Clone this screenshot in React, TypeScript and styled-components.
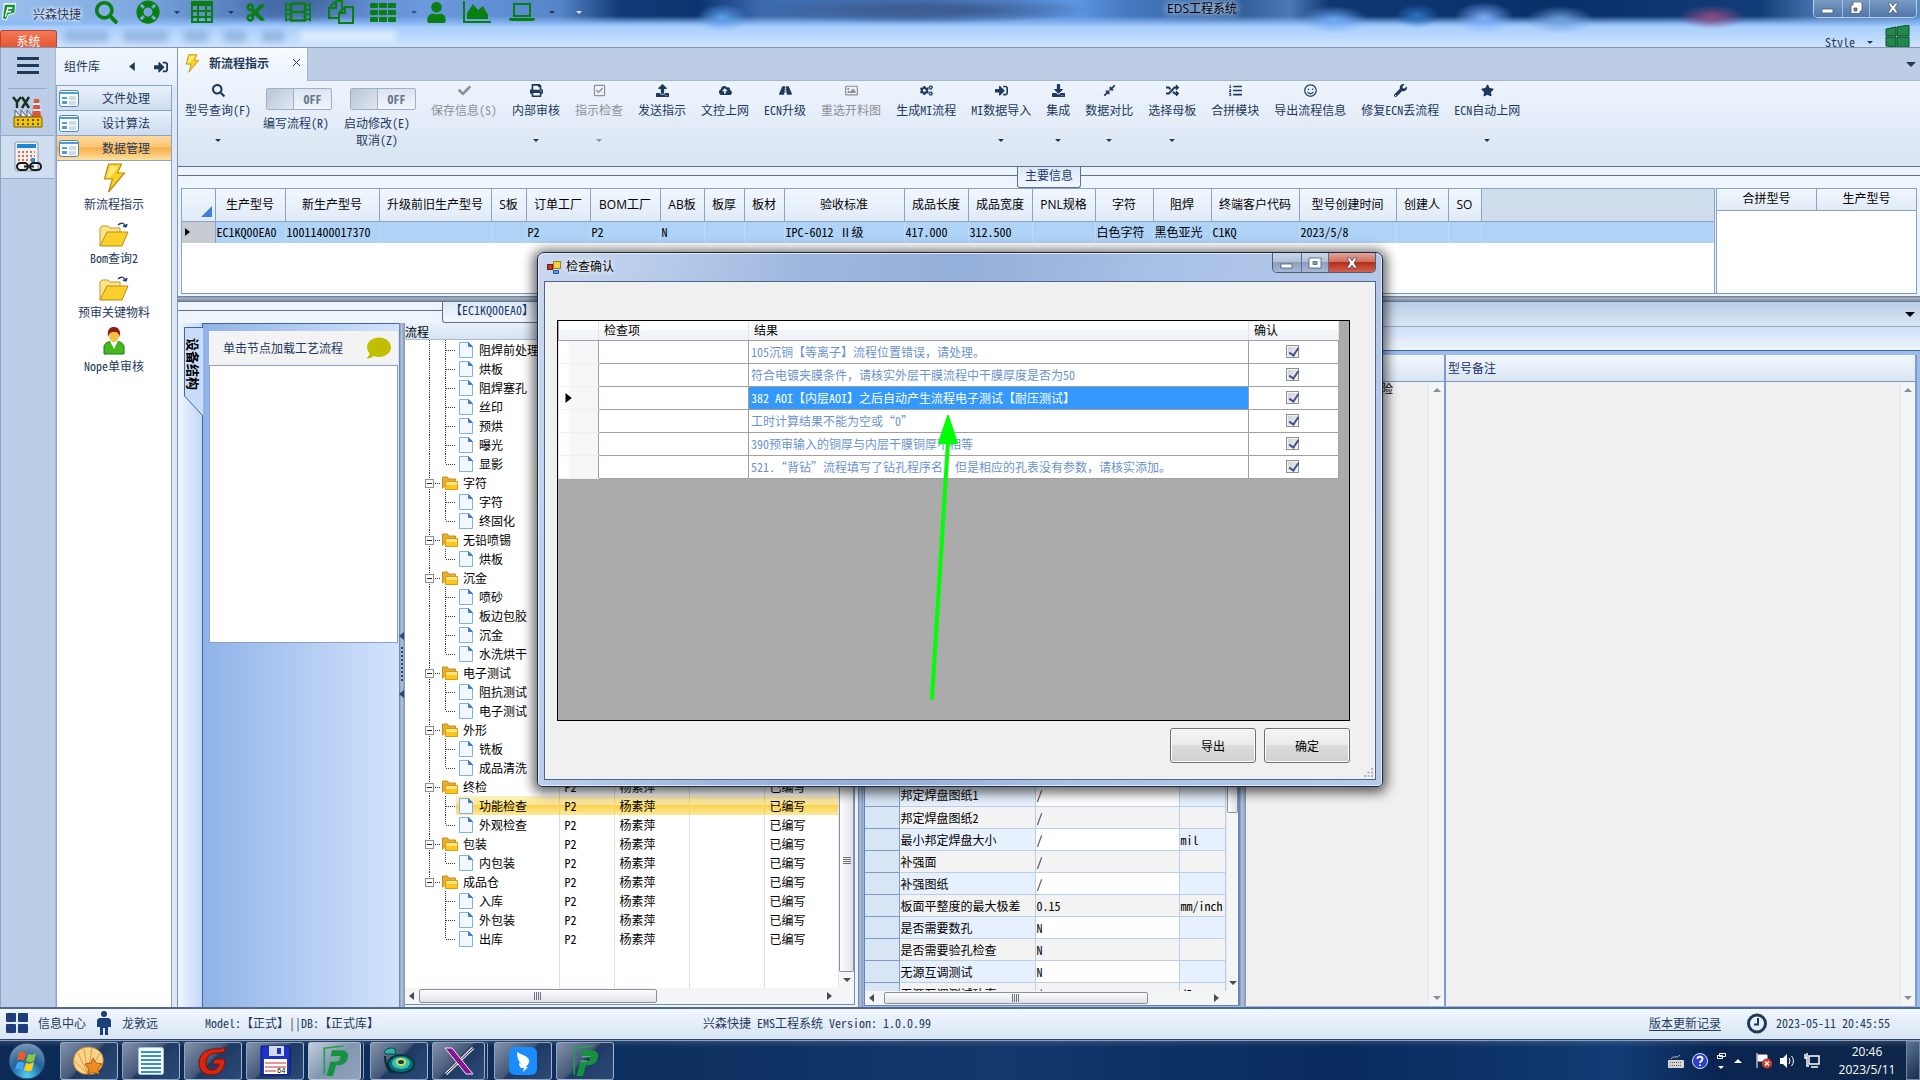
import React from 'react';
import styled, { createGlobalStyle, css } from 'styled-components';
import {
  FaSearch, FaLifeRing, FaCut, FaFilm, FaUser, FaCheck, FaPrint, FaRegCheckSquare, FaUpload,
  FaCloudUploadAlt, FaRoad, FaRegImage, FaCogs, FaSignInAlt, FaDownload, FaCompressAlt,
  FaRandom, FaListOl, FaRegSmile, FaWrench, FaStar, FaComment,
} from 'react-icons/fa';

const song = '"Noto Sans Mono CJK SC", "Noto Sans CJK SC", sans-serif';
const yahei = '"Open Sans", "Noto Sans CJK SC", sans-serif';
const navy = '#1e395b';
const line = '#8aa3c4';

const GlobalStyle = createGlobalStyle`
  * { box-sizing: border-box; }
  body { margin: 0; font: 12px/16px ${song}; color: #000; overflow: hidden; }
  button, input { font: inherit; color: inherit; margin: 0; padding: 0; }
  button { border: 0; background: none; }
  table { border-collapse: collapse; table-layout: fixed; }
  th { font-weight: 400; }
  th, td { padding: 0; }
  svg { display: block; flex: none; }
`;

const Desktop = styled.div`
  position: relative;
  display: flex;
  flex-direction: column;
  height: 100vh;
  background: #d9e6f5;
`;

const Row = styled.div`
  display: flex;
  align-items: center;
`;

/* ---------- title bar ---------- */

const TitleBar = styled.header`
  position: relative;
  flex: none;
  height: 48px;
  display: flex;
  flex-direction: column;
  overflow: hidden;
  border-bottom: 1px solid #7f95b5;
  background:
    radial-gradient(ellipse 26px 14px at 722px 18px, #5fa0ee, transparent),
    radial-gradient(ellipse 170px 14px at 920px 10px, #3d5f94 30%, transparent),
    radial-gradient(ellipse 34px 14px at 1334px 20px, #6faaf4, transparent),
    radial-gradient(ellipse 22px 12px at 1417px 16px, #2a74c4, transparent),
    radial-gradient(ellipse 30px 16px at 1484px 18px, #7eb0fa, transparent),
    radial-gradient(ellipse 34px 14px at 1560px 20px, #6fa2e0, transparent),
    radial-gradient(ellipse 34px 12px at 1712px 17px, #8d4d80, transparent),
    radial-gradient(ellipse 70px 24px at 300px 0, #41659d, transparent),
    linear-gradient(180deg, transparent 16px, #8dbaf5 24px, #a9cffd 27px, #cfe4fb 48px),
    linear-gradient(90deg, #9cbfee 0, #7fa9e0 130px, #4a74b4 270px, #6b9ade 420px, #5584c8 560px, #123a78 620px,
      #0d3470 700px, #3b6aae 760px, #4a78ba 900px, #5d93e0 1080px, #4478bf 1130px, #345e9b 1240px, #4b78b6 1290px,
      #0f3872 1330px, #0a3069 1560px, #123c78 1760px, #4a78b2 1820px, #5b8ac2 100%);
`;

const Ghosts = styled.div`
  position: absolute;
  left: 64px;
  top: 31px;
  display: flex;
  gap: 16px;
  filter: blur(3px);
`;

const Ghost = styled.i<{ $w: number; $light?: boolean }>`
  width: ${p => p.$w}px;
  height: 11px;
  background: ${p => (p.$light ? '#dcebff' : 'rgba(80, 120, 180, 0.35)')};
`;

const QuickBar = styled(Row)`
  height: 27px;
  padding: 0 0 2px 1px;
  color: #0a7d14;
`;

const AppName = styled.span`
  width: 66px;
  padding: 4px 0 0 16px;
  color: ${navy};
  white-space: nowrap;
  text-shadow: 0 0 4px #fff, 0 0 4px #fff;
`;

const QuickButton = styled.button<{ $w: number }>`
  width: ${p => p.$w}px;
  height: 24px;
  display: flex;
  align-items: center;
  gap: 14px;
  color: #087f10;
  white-space: nowrap;
`;

const SearchButton = styled(QuickButton)`
  padding-left: 12px;
`;

const Caret = styled.i<{ $color?: string; $size?: number }>`
  flex: none;
  width: 0;
  height: 0;
  border: ${p => p.$size ?? 3}px solid transparent;
  border-top-color: ${p => p.$color ?? navy};
  border-bottom: 0;
`;

const WindowTitle = styled.span`
  position: absolute;
  left: 1167px;
  top: 0;
  font-family: ${yahei};
  line-height: 18px;
  text-shadow: 0 0 6px #dfeeff, 0 0 8px #dfeeff;
`;

const FrameButtons = styled.div<{ $dialog?: boolean }>`
  position: absolute;
  top: ${p => (p.$dialog ? 0 : -1)}px;
  right: ${p => (p.$dialog ? 6 : 3)}px;
  display: flex;
  border: 1px solid ${p => (p.$dialog ? '#4d5c78' : '#b9cfe8')};
  border-top: 0;
  border-radius: 0 0 5px 5px;
  overflow: hidden;
  height: ${p => (p.$dialog ? 20 : 19)}px;
`;

const FrameButton = styled.button<{ $w: number; $close?: boolean; $clear?: boolean }>`
  width: ${p => p.$w}px;
  display: flex;
  align-items: center;
  justify-content: center;
  border-left: 1px solid ${p => (p.$clear ? '#a5bfdd' : '#5b6b88')};
  background: ${p =>
    p.$clear
      ? 'linear-gradient(#7c9cc4, #4f77a9)'
      : p.$close
        ? 'linear-gradient(#e3a49b 0, #d17060 45%, #b62f1b 50%, #d4604a 100%)'
        : 'linear-gradient(#c9d6ea 0, #b3c2da 45%, #8d9fbe 50%, #a6b8d5 100%)'};
  &:first-child { border-left: 0; }
`;

const RibbonRow = styled(Row)`
  justify-content: space-between;
  align-items: flex-end;
  flex: 1;
`;

const SystemTab = styled.button`
  width: 57px;
  height: 17px;
  padding-top: 3px;
  border: 1px solid #b9442a;
  border-bottom: 0;
  border-radius: 3px 3px 0 0;
  background: linear-gradient(#f2795a, #e8562f);
  color: #fff;
  line-height: 13px;
`;

const StyleMenu = styled.button`
  display: flex;
  align-items: flex-end;
  gap: 12px;
  height: 21px;
  padding-right: 10px;
  color: ${navy};
  line-height: 11px;
  & > i { margin-bottom: 3px; }
`;

/* ---------- left rail and library ---------- */

const Body = styled.div`
  flex: 1;
  min-height: 0;
  display: flex;
`;

const Rail = styled.nav`
  width: 56px;
  flex: none;
  display: flex;
  flex-direction: column;
  padding-right: 1px;
  border-left: 1px solid #8fa5c4;
  border-right: 1px solid #a5b9d6;
  background: #bccee7;
`;

const RailButton = styled.button<{ $h: number; $active?: boolean }>`
  height: ${p => p.$h}px;
  display: flex;
  align-items: center;
  justify-content: center;
  border-bottom: 1px solid #94aac9;
  background: ${p => (p.$active ? '#cfdef1' : 'transparent')};
`;

const MenuButton = styled(RailButton)`
  margin: 0 7px;
  padding-bottom: 5px;
`;

const Library = styled.aside`
  width: 122px;
  flex: none;
  display: flex;
  flex-direction: column;
  padding-right: 5px;
  background: #dce8f7;
  border-right: 1px solid #7d96ba;
`;

const LibraryHead = styled(Row)`
  height: 37px;
  margin-right: -5px;
  padding: 0 9px 0 8px;
  gap: 17px;
  background: linear-gradient(#f3f8fe, #e5eefa);
  color: ${navy};
  font-family: ${yahei};
  font-size: 12px;
  & > b { margin-right: auto; font-weight: 400; }
`;

const LibraryBody = styled.div`
  flex: 1;
  display: flex;
  flex-direction: column;
  background: #fff;
  border: 1px solid #8ba3c6;
  border-bottom: 0;
`;

const Category = styled.button<{ $active?: boolean }>`
  height: 25px;
  flex: none;
  display: flex;
  align-items: center;
  gap: 23px;
  padding-left: 2px;
  color: ${navy};
  border-bottom: 1px solid #8ba3c6;
  background: ${p =>
    p.$active
      ? 'linear-gradient(#fcd9a0 0, #fbc672 45%, #f9ae48 50%, #fde1a0 100%)'
      : 'linear-gradient(#e9f1fb, #cddcef)'};
`;

const ToolEntry = styled.button`
  display: flex;
  flex-direction: column;
  align-items: center;
  justify-content: flex-end;
  gap: 3px;
  height: 54px;
  padding-bottom: 3px;
  color: ${navy};
`;

/* ---------- document area ---------- */

const Documents = styled.main`
  flex: 1;
  min-width: 0;
  display: flex;
  flex-direction: column;
`;

const TabStrip = styled(Row)`
  height: 33px;
  flex: none;
  justify-content: space-between;
  padding-right: 4px;
  background: #bccde5;
  border-bottom: 1px solid #a3b7d2;
`;

const DocTab = styled(Row)`
  width: 130px;
  height: 33px;
  padding: 0 6px 2px 7px;
  gap: 9px;
  border-right: 1px solid #9fb3d0;
  background: linear-gradient(#f8fbff, #ecf3fc);
  color: ${navy};
  font-weight: 700;
  & > button { margin-left: auto; }
`;

const Toolbar = styled.div`
  height: 86px;
  flex: none;
  display: flex;
  gap: 15px;
  padding: 3px 7px 0;
  background: linear-gradient(#eef4fd, #d8e4f2);
  border-bottom: 1px solid #5d7290;
`;

const ToolButton = styled.button`
  display: flex;
  flex-direction: column;
  align-items: center;
  height: 62px;
  color: ${navy};
  white-space: nowrap;
  &:disabled { color: #8e9196; }
  & > span { margin: 5px 0 21px; }
`;

const SwitchGroup = styled.div<{ $w: number }>`
  width: ${p => p.$w}px;
  margin-left: -3px;
  padding-top: 4px;
  color: ${navy};
  text-align: center;
  line-height: 17px;
  white-space: nowrap;
  & > span { display: block; width: 66px; }
`;

const Switch = styled.label`
  display: flex;
  width: 66px;
  height: 22px;
  margin: 0 0 4px auto;
  border: 1px solid #9fafc6;
  border-radius: 2px;
  background: linear-gradient(#dbe4ef, #f1f6fc);
  color: #69788f;
  font-weight: 700;
  & > input {
    appearance: none;
    width: 27px;
    border-right: 1px solid #9fafc6;
    background: linear-gradient(135deg, #b9c5d5, #dfe7f1);
  }
  & > span { flex: 1; line-height: 20px; }
`;

const TopGroup = styled.section`
  height: 129px;
  flex: none;
  display: flex;
  flex-direction: column;
  align-items: stretch;
  background: #eaf2fc;
`;

const CaptionRow = styled.div`
  height: 21px;
  flex: none;
  display: flex;
  justify-content: center;
  background: linear-gradient(#edf4fd 8px, #5d7290 8px, #5d7290 9px, #eef5fd 9px);
`;

const Caption = styled.h2<{ $w?: number }>`
  margin: 0;
  height: 21px;
  width: ${p => (p.$w ? p.$w + 'px' : 'auto')};
  padding: 0 7px;
  font: 12px/15px ${song};
  color: #1c3a6e;
  border: 1px solid #5d7290;
  border-top: 0;
  border-radius: 0 0 3px 3px;
  background: linear-gradient(#dde8f6, #f3f8fe);
`;

const TopGrids = styled.div`
  flex: 1;
  display: flex;
  gap: 1px;
  margin: 0 3px 2px;
  border-bottom: 1px solid #7a96bb;
`;

const GridBox = styled.div<{ $w?: number }>`
  ${p => (p.$w ? css`width: ${p.$w}px; flex: none;` : css`flex: 1;`)}
  min-width: 0;
  overflow: hidden;
  background: #fff;
  border: 1px solid ${line};
  border-bottom: 0;
`;

const InfoTable = styled.table<{ $head: number }>`
  width: 100%;
  white-space: nowrap;
  & th {
    height: ${p => p.$head}px;
    font-family: ${yahei};
    text-align: center;
    border-right: 1px solid ${line};
    border-bottom: 1px solid ${line};
    background: linear-gradient(#f1f7fe, #e0eaf6);
    overflow: hidden;
  }
  & th:last-child { border-right: 0; }
  & td {
    height: 22px;
    padding-left: 1px;
    background: #afd2f7;
    border-right: 1px solid #bfdcf8;
    overflow: hidden;
  }
`;

const CornerCell = styled.th`
  & > svg { margin: 14px 3px 0 auto; }
`;
const BlankHead = styled.th`
  && { background: #cfdded; }
`;
const MarkerCell = styled.td`
  && { background: #c7cbd2; border-right: 1px solid ${line}; padding-left: 1px; }
`;

const HSplitter = styled.div`
  height: 6px;
  flex: none;
  background: linear-gradient(#5d7290 0, #a8b2c0 2px, #8f9bad 4px, #5d7290 6px);
`;

const VSplitter = styled.div<{ $w: number }>`
  width: ${p => p.$w}px;
  flex: none;
  display: flex;
  flex-direction: column;
  align-items: center;
  justify-content: center;
  gap: 7px;
  background: linear-gradient(90deg, #5f7ba8, #b4c4dc 40%, #8494ac);
`;

const Dots = styled.i`
  width: 2px;
  height: 36px;
  background: repeating-linear-gradient(#26497f 0 2px, transparent 2px 4px);
`;

const Lower = styled.div`
  flex: 1;
  min-height: 0;
  display: flex;
`;

const LeftGroup = styled.section`
  width: 680px;
  flex: none;
  display: flex;
  flex-direction: column;
  background: #edf4fd;
`;

const LeftBody = styled.div`
  flex: 1;
  min-height: 0;
  display: flex;
  padding-left: 4px;
`;

const SideTabs = styled.div`
  width: 21px;
  flex: none;
  position: relative;
  background: linear-gradient(90deg, #e6effd, #c3d8f7);
  border-right: 1px solid #3f65a5;
`;

const SideTabLabel = styled.button`
  position: absolute;
  left: 3px;
  top: 15px;
  writing-mode: vertical-rl;
  text-orientation: sideways;
  font-size: 13px;
  line-height: 16px;
  font-weight: 700;
`;

const EquipPane = styled.div`
  width: 196px;
  flex: none;
  display: flex;
  flex-direction: column;
  padding: 7px 1px 0 6px;
  border-top: 1px solid #3f65a5;
  background: linear-gradient(90deg, #8fb3e8, #d3e3fc);
`;

const EquipHead = styled(Row)`
  height: 34px;
  flex: none;
  justify-content: space-between;
  padding: 0 7px 0 14px;
  background: #f3f3f4;
  color: ${navy};
`;

const EquipBox = styled.div`
  height: 278px;
  background: #fff;
  border: 1px solid #8aa3c4;
`;

const TreePane = styled.div`
  flex: 1;
  min-width: 0;
  display: flex;
  flex-direction: column;
  margin: 0 3px 2px 0;
  border-right: 1px solid #6f8fbc;
  border-bottom: 1px solid #6f8fbc;
  background: #fff;
`;

const TreeHead = styled.div`
  height: 17px;
  flex: none;
  line-height: 18px;
  border-bottom: 1px solid #a9bbd3;
  background: linear-gradient(#e9f1fb, #d6e3f3);
`;

const TreeMain = styled.div`
  flex: 1;
  min-height: 0;
  display: flex;
`;

const TreeScroll = styled.div`
  flex: 1;
  min-width: 0;
  overflow: hidden;
`;

const TreeTable = styled.table`
  width: 100%;
  height: 100%;
  white-space: nowrap;
  & td { height: 19px; border-right: 1px solid #dcdfe4; padding-left: 5px; }
  & td:first-child { padding: 0; }
  & td:last-child { border-right: 0; }
  & tr:last-child td { height: auto; }
`;

const selectedFill = 'linear-gradient(#fdf0bf 0, #fde68f 45%, #fbd24f 50%, #fde99b 100%)';

const TreeRow = styled.tr<{ $selected?: boolean }>`
  & > td + td { background: ${p => (p.$selected ? selectedFill : 'none')}; }
  ${p => p.$selected && css`& > td { border-right-color: #f6d565 !important; }`}
`;

const TreeCell = styled.div`
  display: flex;
  height: 19px;
`;

const TreeLabel = styled.div<{ $selected?: boolean; $leaf: boolean }>`
  flex: 1;
  display: flex;
  align-items: center;
  gap: ${p => (p.$leaf ? 6 : 5)}px;
  padding-left: ${p => (p.$leaf ? 3 : 1)}px;
  background: ${p => (p.$selected ? selectedFill : 'none')};
  line-height: 19px;
`;

/* ---------- scroll bars ---------- */

const VBar = styled.div<{ $w: number }>`
  width: ${p => p.$w}px;
  flex: none;
  display: flex;
  flex-direction: column;
  justify-content: space-between;
  align-items: center;
  border-left: 1px solid #e3e6ea;
  background: #f4f5f7;
`;

const HBar = styled.div<{ $h?: number }>`
  height: ${p => p.$h ?? 16}px;
  flex: none;
  display: flex;
  align-items: center;
  background: #f4f5f7;
`;

const HThumb = styled.button<{ $w: number; $h?: number }>`
  width: ${p => p.$w}px;
  height: ${p => p.$h ?? 14}px;
  margin-right: auto;
  border: 1px solid #8d9097;
  border-radius: 2px;
  background:
    repeating-linear-gradient(90deg, #6d7078 0 1px, transparent 1px 2px) center / 8px 8px no-repeat,
    linear-gradient(#fbfcfd, #dfe3e9);
`;

const VThumb = styled.button<{ $grip: string; $share?: string }>`
  ${p => (p.$share ? css`height: ${p.$share};` : css`flex: 1;`)}
  width: 100%;
  border: 1px solid #8d9097;
  border-top: 0;
  border-radius: 0 0 2px 2px;
  background:
    repeating-linear-gradient(#6d7078 0 1px, transparent 1px 2px) center ${p => p.$grip} / 8px 8px no-repeat,
    linear-gradient(90deg, #fbfcfd, #dfe3e9);
`;

const ArrowButton = styled.button<{ $after?: number }>`
  width: 14px;
  height: 16px;
  flex: none;
  display: flex;
  align-items: center;
  justify-content: center;
  margin-right: ${p => p.$after ?? 0}px;
`;

/* ---------- right dock ---------- */

const Dock = styled.section`
  flex: 1;
  min-width: 0;
  display: flex;
  flex-direction: column;
`;

const DockStrip = styled(Row)`
  height: 25px;
  flex: none;
  justify-content: flex-end;
  padding-right: 5px;
  background: linear-gradient(#b9cce6, #dbe7f5);
  border-bottom: 1px solid #93a8c6;
`;

const DockBand = styled.div`
  height: 24px;
  flex: none;
  background: linear-gradient(#cfdff7, #eff5fd);
  border-bottom: 1px solid #3f65a5;
`;

const DockBody = styled.div`
  flex: 1;
  min-height: 0;
  display: flex;
  padding: 4px 3px 1px 1px;
  background: #9cbcec;
`;

const ParamPane = styled.div`
  width: 375px;
  flex: none;
  display: flex;
  flex-direction: column;
  background: #e8f0fa;
  border: 1px solid #5f86bd;
`;

const ParamMain = styled.div`
  flex: 1;
  min-height: 0;
  display: flex;
`;

const ParamScroll = styled.div`
  flex: 1;
  overflow: hidden;
  display: flex;
  flex-direction: column;
  padding-top: 428px;
`;

const ParamTable = styled.table`
  width: 100%;
  white-space: nowrap;
  & td {
    height: 22px;
    padding-left: 1px;
    border-right: 1px solid #b9cfec;
    border-bottom: 1px solid #b9cfec;
    overflow: hidden;
    background: #f3f3f3;
  }
  & th { background: #d8e5f4; border: 1px solid #7f9cc6; border-left: 0; }
  & tr:nth-child(odd) td { background: #e7f1fd; }
  & tr:nth-child(odd) td:nth-child(3) { background: #fff; }
`;

const NotePane = styled.div<{ $w?: number }>`
  ${p => (p.$w ? css`width: ${p.$w}px; flex: none;` : css`flex: 1;`)}
  display: flex;
  flex-direction: column;
  border-right: 2px solid #7d9cc9;
  background: #f0f0f0;
`;

const NoteHead = styled.h3`
  height: 27px;
  flex: none;
  margin: 0;
  padding-left: 2px;
  font: 12px/26px ${song};
  color: #1c2f6e;
  border-bottom: 1px solid #7a96bb;
  background: linear-gradient(#f3f8fd, #d9e5f2);
`;

const NoteBody = styled.div`
  flex: 1;
  display: flex;
  justify-content: flex-end;
  line-height: 14px;
`;

const NoteText = styled.p`
  margin: 0 35px 0 0;
`;

/* ---------- status bar ---------- */

const StatusBar = styled.footer`
  height: 33px;
  flex: none;
  display: grid;
  grid-template-columns: 37% auto 1fr;
  align-items: center;
  padding: 0 30px 2px 6px;
  border-top: 2px solid #53688a;
  border-bottom: 1px solid #30435f;
  background: linear-gradient(#f0f6fe, #d9e5f4);
  color: ${navy};
`;

const StatusPart = styled(Row)<{ $end?: boolean }>`
  gap: 9px;
  justify-content: ${p => (p.$end ? 'flex-end' : 'flex-start')};
  & > output { margin-left: 38px; }
  & > a { color: ${navy}; margin-right: 17px; text-underline-offset: 2px; }
`;

const TaskBar = styled.nav`
  height: 40px;
  flex: none;
  display: flex;
  align-items: center;
  gap: 4px;
  padding-left: 8px;
  border-top: 1px solid #8ba0bf;
  background: linear-gradient(rgba(255, 255, 255, 0.12), transparent 6px),
    linear-gradient(90deg, #0c2a55 0, #0d2f5f 600px, #14386c 1000px, #082a5c 1340px, #123c74 1620px, #0a2450 1720px, #0e2748 100%);
`;

const StartButton = styled.button`
  width: 48px;
`;

const TaskButton = styled.button<{ $active?: boolean; $stack?: boolean }>`
  width: 58px;
  height: 38px;
  display: flex;
  align-items: center;
  justify-content: center;
  border: 1px solid rgba(190, 205, 225, 0.7);
  border-radius: 3px;
  background: ${p =>
    p.$active
      ? 'linear-gradient(135deg, #c3d0df, #8296b0 50%, #8fa3bc)'
      : 'linear-gradient(135deg, #8493ab 0, #46597a 45%, #1f3a63 50%, #2c4a78 100%)'};
  ${p => p.$stack && css`
    width: 53px;
    margin-right: 5px;
    box-shadow: 2px 0 0 #1b2f4f, 3px 0 0 #8e9fb8;
  `}
`;

const Tray = styled(Row)`
  margin-left: auto;
  gap: 8px;
  color: #fff;
`;

const Flag = styled.svg`
  margin-left: 6px;
`;

const Clock = styled.time`
  width: 78px;
  font: 12px/18px ${yahei};
  text-align: center;
`;

const ShowDesktop = styled.button`
  width: 14px;
  height: 39px;
  margin-left: -8px;
  border: 1px solid #7286a3;
  background: linear-gradient(135deg, #5d7494, #142d50);
`;

/* ---------- dialog ---------- */

const Dialog = styled.section`
  position: absolute;
  left: 537px;
  top: 252px;
  width: 846px;
  height: 535px;
  display: flex;
  flex-direction: column;
  padding: 0 6px 6px;
  border: 1px solid #1c2a40;
  border-radius: 7px 7px 5px 5px;
  background: linear-gradient(100deg, #c9d8ef 0, #b3c8e8 150px, #9fb7de 260px, #93aed8 420px, #a9c1e6 620px, #b7cbea 100%);
  box-shadow: inset 0 0 0 1px #e0eafa, 0 2px 12px 4px rgba(0, 0, 0, 0.6);
`;

const DialogTitle = styled.h1`
  height: 28px;
  flex: none;
  margin: 0;
  display: flex;
  align-items: center;
  gap: 5px;
  padding-left: 3px;
  font: 12px/16px ${yahei};
  text-shadow: 0 0 6px #fff, 0 0 6px #fff;
`;

const DialogBody = styled.div`
  flex: 1;
  min-height: 0;
  display: flex;
  flex-direction: column;
  gap: 7px;
  padding: 38px 25px 16px 12px;
  border: 1px solid #4d648c;
  background: #f0f0f0;
`;

const ResultBox = styled.div`
  flex: 1;
  border: 1px solid #000;
  background: #ababab;
`;

const ResultTable = styled.table`
  width: 780px;
  white-space: nowrap;
  & th {
    height: 19px;
    padding-left: 5px;
    text-align: left;
    background: linear-gradient(#fff, #fff 45%, #f4f5f7 50%, #f1f2f5);
    border-bottom: 1px solid #a0a0a0;
    border-right: 1px solid #e3e4e6;
  }
  & td {
    height: 23px;
    padding-left: 2px;
    background: #fff;
    border: 1px solid #a0a0a0;
    color: #6b93cf;
  }
  & td:first-child {
    padding-left: 4px;
    border-color: #f0f0f2;
    border-right-color: #a0a0a0;
    background: linear-gradient(90deg, #fff 9px, #f5f6f8 10px);
  }
  & td:last-child { padding: 0 2px 0 0; }
`;

const ResultCell = styled.td<{ $selected?: boolean }>`
  ${p => p.$selected && css`&& { background: #3399ff; color: #fff; }`}
`;

const Tick = styled.input`
  appearance: none;
  display: block;
  width: 13px;
  height: 13px;
  && { margin: 0 auto; }
  border: 1px solid #8e8f8f;
  background: linear-gradient(135deg, #c9ced6, #f6f6f6);
  box-shadow: inset 0 0 0 1px #f4f4f4;
  &:checked::before {
    content: '';
    display: block;
    width: 4px;
    height: 8px;
    margin: 0 0 0 4px;
    border: solid #3d5190;
    border-width: 0 2px 2px 0;
    transform: rotate(35deg);
  }
`;

const DialogButtons = styled.div`
  display: flex;
  justify-content: flex-end;
  gap: 8px;
`;

const PushButton = styled.button`
  width: 86px;
  height: 35px;
  border: 1px solid #707070;
  border-radius: 3px;
  background: linear-gradient(#f4f4f4 0, #ebebeb 48%, #dddddd 50%, #cfcfcf 100%);
  box-shadow: inset 0 0 0 1px #fcfcfc;
`;

const Pointer = styled.svg`
  position: absolute;
  left: 928px;
  top: 412px;
  pointer-events: none;
`;

const Grip = styled.svg`
  position: absolute;
  right: 8px;
  bottom: 8px;
`;

/* ---------- drawings ---------- */

const TableIcon = () => (
  <svg width="24" height="22" viewBox="0 0 24 22" fill="currentColor">
    <path fillRule="evenodd" d="M1 0h22v22H1zM3 5v4h4V5zM9 5v4h6V5zM17 5v4h4V5zM3 11v4h4v-4zM9 11v4h6v-4zM17 11v4h4v-4zM3 17v3h4v-3zM9 17v3h6v-3zM17 17v3h4v-3z" />
  </svg>
);
const ThIcon = () => (
  <svg width="27" height="21" viewBox="0 0 27 21" fill="currentColor">
    {[0, 7, 14].map(y => [0, 9, 18].map(x => <rect key={`${x}-${y}`} x={x} y={y + 1} width="8" height="5" rx="1" />))}
  </svg>
);
const CopyIcon = () => (
  <svg width="26" height="24" viewBox="0 0 26 24" fill="none" stroke="currentColor" strokeWidth="2">
    <path d="M8 1h6v12M8 1 1 8v10h9M8 1v7H1M17 7h8v16H11V13zM17 7v6h-6" />
  </svg>
);
const ChartIcon = () => (
  <svg width="28" height="22" viewBox="0 0 28 22" fill="currentColor">
    <path d="M0 0h2v20h26v2H0zM4 18V12l6-9 5 6 5-4 5 9v4z" />
  </svg>
);
const LaptopIcon = () => (
  <svg width="26" height="18" viewBox="0 0 26 18" fill="currentColor">
    <path fillRule="evenodd" d="M4 0h18v14H4zM6 2v10h14V2zM0 15h26v2l-2 1H2l-2-1z" />
  </svg>
);
const FLogo = ({ w = 16, h = 18, plain }: { w?: number; h?: number; plain?: boolean }) => (
  <svg width={w} height={h} viewBox="0 0 26 30">
    {plain ? (
      <>
        <path d="M3 28V3L21 1" fill="none" stroke="#23a04c" strokeWidth="1.500" />
        <path d="M10 5h9c5 0 7 3 6 7-1 5-5 7-9 7h-2l-3 10H5l4-14h8l1-4H9z" fill="#14923f" />
        <path d="M10 11h8M9 15h6" stroke="#7fb895" />
      </>
    ) : (
      <>
        <path d="M4 0h21l-2 17-11 4-3 8-8-2z" fill="#eef8f0" />
        <path d="M6 3h17l-1 13-11 3-3 8-5-1z" fill="#14923f" />
        <path d="M10 7h9l-1 3h-6l-1 3h6l-1 3h-6l-2 7H6z" fill="#fff" />
      </>
    )}
  </svg>
);
const WinFlag = () => (
  <svg width="25" height="22" viewBox="0 0 25 22" fill="#1f8a4c" stroke="#124d2b">
    <path d="M1 4 11 2v9H1zM12 2l12-2v11H12zM1 12h10v10L1 21zM12 12h12v10H12z" />
  </svg>
);
const Bolt = ({ w, h }: { w: number; h: number }) => (
  <svg width={w} height={h} viewBox="0 0 22 30">
    <path d="M5 1h13l-4 9h7L5 29l4-13H1z" fill="#fbd223" stroke="#b98a12" strokeWidth="1.2" />
    <path d="M7 3h8l-8 11H3z" fill="#fff3a0" opacity="0.7" />
  </svg>
);
const BigFolder = () => (
  <svg width="30" height="25" viewBox="0 0 30 25">
    <path d="M1 24V6l2-2h6l2 2h10v5" fill="#fbe48c" stroke="#c29a28" />
    <path d="M1 24 8 10h21l-6 14z" fill="#fbd02a" stroke="#b88b14" />
    <path d="M19 3c3-3 7-2 8 2m0 0-3-1m3 1 1-3" fill="none" stroke="#24406e" strokeWidth="1.5" />
  </svg>
);
const Person = () => (
  <svg width="22" height="29" viewBox="0 0 22 29">
    <path d="M1 28V21c0-4 5-6 10-6s10 2 10 6v7z" fill="#44b81e" stroke="#1d7a10" />
    <path d="M7 15h8l-4 8z" fill="#fff" />
    <ellipse cx="11" cy="9" rx="5" ry="7" fill="#f3bf3c" />
    <path d="M5 11C4 3 7 1 11 1s7 3 6 10c-1-3-2-5-6-5s-5 2-6 5z" fill="#8c1f12" />
  </svg>
);
const CatIcon = () => (
  <svg width="20" height="17" viewBox="0 0 20 17">
    <rect x="0.5" y="0.5" width="19" height="16" rx="2" fill="#f5fbff" stroke="#4d86b5" />
    <path d="M1 2h18v2H1z" fill="#4f9fd6" />
    <path d="M3 7h5v2H3zM3 11h5v3H3z" fill="#5b9ccb" />
    <path d="M10 7h7M10 9h7M10 12h7M10 14h7" stroke="#a8bccd" />
  </svg>
);
const Factory = () => (
  <svg width="31" height="32" viewBox="0 0 31 32">
    <path d="m1 1 4 5 4-5M5 6v6M10 1l7 11M17 1l-7 11" fill="none" stroke="#14301c" strokeWidth="2.4" />
    <path d="M22 3h5l2 18h-9z" fill="#d9553c" />
    <path d="M21 8h7M21 14h8" stroke="#eef" strokeWidth="2" />
    <path d="M3 14l6 7v-7l6 7v-7l6 7H3z" fill="#e8edf3" stroke="#55606e" />
    <path d="M2 21h28v10H2z" fill="#f2c300" stroke="#7a6200" />
    <path d="M5 24h23M5 28h23" stroke="#5f4d00" strokeWidth="2" strokeDasharray="2 3" />
  </svg>
);
const Calculator = () => (
  <svg width="30" height="32" viewBox="0 0 30 32">
    <rect x="2" y="1" width="23" height="29" rx="2" fill="#eef1f5" stroke="#8d97a5" />
    <rect x="4" y="3" width="19" height="4" fill="#1f86cf" />
    <path d="M5 11h17M5 15h17M5 19h17" stroke="#ef6a3c" strokeWidth="2" strokeDasharray="2 2" />
    <path d="M18 17h4v4h-4z" fill="#2f8fd4" />
    <path d="M11 25.500h10" stroke="#1a1a1a" strokeWidth="2" />
    <rect x="4" y="22" width="11" height="7" rx="3.5" fill="none" stroke="#1a1a1a" strokeWidth="2" />
    <rect x="17" y="22" width="11" height="7" rx="3.5" fill="none" stroke="#1a1a1a" strokeWidth="2" />
  </svg>
);
const PageIcon = () => (
  <svg width="14" height="16" viewBox="0 0 14 16">
    <path d="M0.5 0.5h9l4 4v11h-13z" fill="#f2f8ff" stroke="#7fb0ea" />
    <path d="M9.500 0.500v4h4z" fill="#3f7fd6" stroke="#3f7fd6" />
  </svg>
);
const FolderIcon = () => (
  <svg width="16" height="14" viewBox="0 0 16 14">
    <path d="M0.500 12.500v-11.500h5l1 2h7v3" fill="#e9ae2e" stroke="#c28e22" />
    <path d="M3.500 5.500h12v8h-12z" fill="#ffc517" stroke="#d99a12" />
    <path d="M4 6h11v3H4z" fill="#ffe483" />
  </svg>
);
const Tri = ({ d, s = 8, c = '#4a4d55' }: { d: 'l' | 'r' | 'u' | 'd'; s?: number; c?: string }) => {
  const path = { l: 'M6 0 1 4l5 4z', r: 'M2 0l5 4-5 4z', u: 'M0 6l4-4 4 4z', d: 'M0 2l4 4 4-4z' }[d];
  return <svg width={s} height={s} viewBox="0 0 8 8"><path d={path} fill={c} /></svg>;
};
const WinGlyph = ({ k }: { k: 'min' | 'max' | 'restore' | 'close' }) => (
  <svg width="14" height="12" viewBox="0 0 14 12" fill="#fff" stroke="#4a5874" strokeWidth="0.8">
    {k === 'min' && <rect x="1" y="7" width="11" height="4" />}
    {k === 'max' && <path fillRule="evenodd" d="M1 1h12v10H1zM5 4.500v3h4v-3z" />}
    {k === 'restore' && <path fillRule="evenodd" d="M4 0h9v9h-2v2.500H2V3h2zM5 6v3h3V6z" />}
    {k === 'close' && <path d="M2 1h3l2 3 2-3h3L9 6l3 5H9L7 8l-2 3H2l3-5z" />}
  </svg>
);

const Guides = ({ leaf, last, main }: { leaf: boolean; last: boolean; main: boolean }) => (
  <svg width={leaf ? 51 : 36} height="19" stroke="#333" fill="none" shapeRendering="crispEdges">
    {main && <path d="M24.500 0V19" strokeDasharray="1 1" />}
    {leaf && <path d={`M40.500 0V${last ? 10 : 19}M41 10.500h9`} strokeDasharray="1 1" />}
    {!leaf && (
      <>
        {!main && <path d="M24.500 0V6" strokeDasharray="1 1" />}
        <rect x="20.500" y="6.500" width="8" height="8" fill="#fff" stroke="#8b8f98" />
        <path d="M22 10.500h5" stroke="#222" />
        <path d="M30 10.500h5" strokeDasharray="1 1" />
      </>
    )}
  </svg>
);

/* ---------- data ---------- */

const tools: { label: string; icon: React.ReactNode; off?: boolean; menu?: boolean }[] = [
  { label: '保存信息(S)', icon: <FaCheck size={13} />, off: true },
  { label: '内部审核', icon: <FaPrint size={13} />, menu: true },
  { label: '指示检查', icon: <FaRegCheckSquare size={13} />, off: true, menu: true },
  { label: '发送指示', icon: <FaUpload size={13} /> },
  { label: '文控上网', icon: <FaCloudUploadAlt size={13} /> },
  { label: 'ECN升级', icon: <FaRoad size={13} /> },
  { label: '重选开料图', icon: <FaRegImage size={13} />, off: true },
  { label: '生成MI流程', icon: <FaCogs size={13} /> },
  { label: 'MI数据导入', icon: <FaSignInAlt size={13} />, menu: true },
  { label: '集成', icon: <FaDownload size={13} />, menu: true },
  { label: '数据对比', icon: <FaCompressAlt size={13} />, menu: true },
  { label: '选择母板', icon: <FaRandom size={13} />, menu: true },
  { label: '合拼模块', icon: <FaListOl size={13} /> },
  { label: '导出流程信息', icon: <FaRegSmile size={13} /> },
  { label: '修复ECN丢流程', icon: <FaWrench size={13} /> },
  { label: 'ECN自动上网', icon: <FaStar size={13} />, menu: true },
];

const columns: [string, number, string][] = [
  ['生产型号', 70, 'EC1KQ00EA0'], ['新生产型号', 94, '10011400017370'], ['升级前旧生产型号', 112, ''],
  ['S板', 35, ''], ['订单工厂', 64, 'P2'], ['BOM工厂', 70, 'P2'], ['AB板', 44, 'N'], ['板厚', 40, ''],
  ['板材', 40, ''], ['验收标准', 120, 'IPC-6012 Ⅱ级'], ['成品长度', 64, '417.000'], ['成品宽度', 64, '312.500'],
  ['PNL规格', 63, ''], ['字符', 58, '白色字符'], ['阻焊', 58, '黑色亚光'], ['终端客户代码', 88, 'C1KQ'],
  ['型号创建时间', 97, '2023/5/8'], ['创建人', 52, ''], ['SO', 33, ''],
];

const groups: [string, string[]][] = [
  ['', ['阻焊前处理', '烘板', '阻焊塞孔', '丝印', '预烘', '曝光', '显影']],
  ['字符', ['字符', '终固化']],
  ['无铅喷锡', ['烘板']],
  ['沉金', ['喷砂', '板边包胶', '沉金', '水洗烘干']],
  ['电子测试', ['阻抗测试', '电子测试']],
  ['外形', ['铣板', '成品清洗']],
  ['终检', ['功能检查', '外观检查']],
  ['包装', ['内包装']],
  ['成品仓', ['入库', '外包装', '出库']],
];

const nodes = groups.flatMap(([folder, leaves], g) => {
  const lastGroup = g === groups.length - 1;
  const rows = leaves.map((name, i) => ({ name, leaf: true, last: i === leaves.length - 1, main: !lastGroup }));
  return folder ? [{ name: folder, leaf: false, last: false, main: !lastGroup }, ...rows] : rows;
});

const params: [string, string, string][] = [
  ['邦定焊盘图纸1', '/', ''], ['邦定焊盘图纸2', '/', ''], ['最小邦定焊盘大小', '/', 'mil'], ['补强面', '/', ''],
  ['补强图纸', '/', ''], ['板面平整度的最大极差', '0.15', 'mm/inch'], ['是否需要数孔', 'N', ''],
  ['是否需要验孔检查', 'N', ''], ['无源互调测试', 'N', ''], ['无源互调测试功率', '/', 'dBm'],
];

const results = [
  '105沉铜【等离子】流程位置错误，请处理。',
  '符合电镀夹膜条件，请核实外层干膜流程中干膜厚度是否为50',
  '382 AOI【内层AOI】之后自动产生流程电子测试【耐压测试】',
  '工时计算结果不能为空或“0”',
  '390预审输入的铜厚与内层干膜铜厚不相等',
  '521.“背钻”流程填写了钻孔程序名，但是相应的孔表没有参数，请核实添加。',
];

/* ---------- parts ---------- */

const Top = () => (
  <TitleBar>
    <Ghosts>
      <Ghost $w={44} /><Ghost $w={44} /><Ghost $w={24} /><Ghost $w={22} /><Ghost $w={22} /><Ghost $w={96} $light />
    </Ghosts>
    <QuickBar>
      <FLogo />
      <AppName>兴森快捷</AppName>
      <SearchButton $w={53} aria-label="查询"><FaSearch size={23} /></SearchButton>
      <QuickButton $w={54} aria-label="帮助"><FaLifeRing size={24} /><Caret /></QuickButton>
      <QuickButton $w={55} aria-label="表格"><TableIcon /><Caret /></QuickButton>
      <QuickButton $w={40} aria-label="剪切"><FaCut size={21} /></QuickButton>
      <QuickButton $w={43} aria-label="影片"><FaFilm size={26} /></QuickButton>
      <QuickButton $w={42} aria-label="复制"><CopyIcon /></QuickButton>
      <QuickButton $w={56} aria-label="网格"><ThIcon /><Caret $color="#2c5688" /></QuickButton>
      <QuickButton $w={37} aria-label="用户"><FaUser size={21} /></QuickButton>
      <QuickButton $w={46} aria-label="图表"><ChartIcon /></QuickButton>
      <QuickButton $w={67} aria-label="电脑"><LaptopIcon /><Caret /></QuickButton>
      <QuickButton $w={10} aria-label="更多"><Caret $color="#dfe9f6" /></QuickButton>
    </QuickBar>
    <WindowTitle>EDS工程系统</WindowTitle>
    <FrameButtons>
      <FrameButton $w={28} $clear aria-label="最小化"><WinGlyph k="min" /></FrameButton>
      <FrameButton $w={27} $clear aria-label="还原"><WinGlyph k="restore" /></FrameButton>
      <FrameButton $w={47} $clear aria-label="关闭"><WinGlyph k="close" /></FrameButton>
    </FrameButtons>
    <RibbonRow>
      <SystemTab>系统</SystemTab>
      <StyleMenu>Style<Caret /><WinFlag /></StyleMenu>
    </RibbonRow>
  </TitleBar>
);

const Side = () => (
  <>
    <Rail>
      <MenuButton $h={41} aria-label="菜单">
        <svg width="22" height="18" fill={navy}><path d="M0 0h22v3H0zM0 7h22v3H0zM0 14h22v3H0z" /></svg>
      </MenuButton>
      <RailButton $h={47} aria-label="工厂"><Factory /></RailButton>
      <RailButton $h={43} $active aria-label="计算"><Calculator /></RailButton>
    </Rail>
    <Library>
      <LibraryHead><b>组件库</b><Tri d="l" s={9} c={navy} /><FaSignInAlt size={14} color={navy} /></LibraryHead>
      <LibraryBody>
        <Category><CatIcon />文件处理</Category>
        <Category><CatIcon />设计算法</Category>
        <Category $active><CatIcon />数据管理</Category>
        <ToolEntry><Bolt w={23} h={30} />新流程指示</ToolEntry>
        <ToolEntry><BigFolder />Bom查询2</ToolEntry>
        <ToolEntry><BigFolder />预审关键物料</ToolEntry>
        <ToolEntry><Person />Nope单审核</ToolEntry>
      </LibraryBody>
    </Library>
  </>
);

const Tools = () => (
  <Toolbar>
    <ToolButton><FaSearch size={13} /><span>型号查询(F)</span><Caret /></ToolButton>
    <SwitchGroup $w={69}>
      <Switch><input type="checkbox" aria-label="编写流程" /><span>OFF</span></Switch>
      <span>编写流程(R)</span>
    </SwitchGroup>
    <SwitchGroup $w={72}>
      <Switch><input type="checkbox" aria-label="启动修改" /><span>OFF</span></Switch>
      <span>启动修改(E)</span>
      <span>取消(Z)</span>
    </SwitchGroup>
    {tools.map(t => (
      <ToolButton key={t.label} disabled={t.off}>
        {t.icon}<span>{t.label}</span>{t.menu && <Caret $color={t.off ? '#8e9196' : navy} />}
      </ToolButton>
    ))}
  </Toolbar>
);

const MainInfo = () => (
  <TopGroup>
    <CaptionRow><Caption>主要信息</Caption></CaptionRow>
    <TopGrids>
      <GridBox>
        <InfoTable $head={32}>
          <colgroup>
            <col style={{ width: 33 }} />
            {columns.map(c => <col key={c[0]} style={{ width: c[1] }} />)}
            <col />
          </colgroup>
          <thead>
            <tr>
              <CornerCell><svg width="11" height="11"><path d="M11 0v11H0z" fill="#3f7fe0" /></svg></CornerCell>
              {columns.map(c => <th key={c[0]}>{c[0]}</th>)}
              <BlankHead />
            </tr>
          </thead>
          <tbody>
            <tr>
              <MarkerCell><Tri d="r" c="#000" /></MarkerCell>
              {columns.map(c => <td key={c[0]}>{c[2]}</td>)}
              <td />
            </tr>
          </tbody>
        </InfoTable>
      </GridBox>
      <GridBox $w={201}>
        <InfoTable $head={21}>
          <thead><tr><th>合拼型号</th><th>生产型号</th></tr></thead>
        </InfoTable>
      </GridBox>
    </TopGrids>
  </TopGroup>
);

const Process = () => (
  <LeftGroup>
    <CaptionRow><Caption $w={152}>【EC1KQ00EA0】</Caption></CaptionRow>
    <LeftBody>
      <SideTabs>
        <svg width="21" height="100" fill="none">
          <path d="M21 4.500H2.500V73L21 93" fill="#c9dcf8" stroke="#3f65a5" />
        </svg>
        <SideTabLabel>设备结构</SideTabLabel>
      </SideTabs>
      <EquipPane>
        <EquipHead>单击节点加载工艺流程<FaComment size={24} color="#bfbf00" /></EquipHead>
        <EquipBox />
      </EquipPane>
      <VSplitter $w={6}><Tri d="l" c="#26497f" /><Dots /><Tri d="l" c="#26497f" /></VSplitter>
      <TreePane>
        <TreeHead>流程</TreeHead>
        <TreeMain>
          <TreeScroll>
            <TreeTable>
              <colgroup>
                <col style={{ width: 154 }} /><col style={{ width: 55 }} /><col style={{ width: 75 }} />
                <col style={{ width: 75 }} /><col />
              </colgroup>
              <tbody>
                {nodes.map((n, i) => {
                  const selected = n.name === '功能检查';
                  return (
                    <TreeRow key={i} $selected={selected}>
                      <td>
                        <TreeCell>
                          <Guides leaf={n.leaf} last={n.last} main={n.main} />
                          <TreeLabel $leaf={n.leaf} $selected={selected}>
                            {n.leaf ? <PageIcon /> : <FolderIcon />}{n.name}
                          </TreeLabel>
                        </TreeCell>
                      </td>
                      <td>P2</td><td>杨素萍</td><td /><td>已编写</td>
                    </TreeRow>
                  );
                })}
                <tr><td /><td /><td /><td /><td /></tr>
              </tbody>
            </TreeTable>
          </TreeScroll>
          <VBar $w={16}>
            <VThumb $grip="83%" aria-label="滚动" />
            <ArrowButton aria-label="向下"><Tri d="d" /></ArrowButton>
          </VBar>
        </TreeMain>
        <HBar>
          <ArrowButton aria-label="向左"><Tri d="l" /></ArrowButton>
          <HThumb $w={238} aria-label="滚动" />
          <ArrowButton aria-label="向右" $after={18}><Tri d="r" /></ArrowButton>
        </HBar>
      </TreePane>
    </LeftBody>
  </LeftGroup>
);

const Params = () => (
  <Dock>
    <DockStrip><Caret $color="#000" $size={5} /></DockStrip>
    <DockBand />
    <DockBody>
      <ParamPane>
        <ParamMain>
          <ParamScroll>
            <ParamTable>
              <colgroup>
                <col style={{ width: 34 }} /><col style={{ width: 136 }} /><col style={{ width: 144 }} /><col />
              </colgroup>
              <tbody>
                {params.map(p => (
                  <tr key={p[0]}><th /><td>{p[0]}</td><td>{p[1]}</td><td>{p[2]}</td></tr>
                ))}
              </tbody>
            </ParamTable>
          </ParamScroll>
          <VBar $w={12}>
            <VThumb $grip="50%" $share="72%" aria-label="滚动" />
            <ArrowButton aria-label="向下"><Tri d="d" /></ArrowButton>
          </VBar>
        </ParamMain>
        <HBar $h={14}>
          <ArrowButton aria-label="向左" $after={5}><Tri d="l" /></ArrowButton>
          <HThumb $w={264} $h={12} aria-label="滚动" />
          <ArrowButton aria-label="向右" $after={15}><Tri d="r" /></ArrowButton>
        </HBar>
      </ParamPane>
      <VSplitter $w={7} />
      <NotePane $w={200}>
        <NoteHead />
        <NoteBody>
          <NoteText>险</NoteText>
          <VBar $w={16}>
            <ArrowButton aria-label="向上"><Tri d="u" c="#8b8e94" /></ArrowButton>
            <ArrowButton aria-label="向下"><Tri d="d" c="#8b8e94" /></ArrowButton>
          </VBar>
        </NoteBody>
      </NotePane>
      <NotePane>
        <NoteHead>型号备注</NoteHead>
        <NoteBody>
          <VBar $w={15}>
            <ArrowButton aria-label="向上"><Tri d="u" c="#8b8e94" /></ArrowButton>
            <ArrowButton aria-label="向下"><Tri d="d" c="#8b8e94" /></ArrowButton>
          </VBar>
        </NoteBody>
      </NotePane>
    </DockBody>
  </Dock>
);

const Check = () => (
  <Dialog role="dialog" aria-label="检查确认">
    <DialogTitle>
      <svg width="14" height="14">
        <rect x="0.500" y="4.500" width="5" height="5" fill="#c8321e" stroke="#7a1a10" />
        <rect x="6.500" y="1.500" width="7" height="7" fill="#f6cf3c" stroke="#a3801a" />
        <rect x="6.500" y="10.500" width="5" height="3" fill="#5b93e6" stroke="#2c5fae" />
      </svg>
      检查确认
    </DialogTitle>
    <FrameButtons $dialog>
      <FrameButton $w={28} aria-label="最小化"><WinGlyph k="min" /></FrameButton>
      <FrameButton $w={27} aria-label="最大化"><WinGlyph k="max" /></FrameButton>
      <FrameButton $w={47} $close aria-label="关闭"><WinGlyph k="close" /></FrameButton>
    </FrameButtons>
    <DialogBody>
      <ResultBox>
        <ResultTable>
          <colgroup>
            <col style={{ width: 40 }} /><col style={{ width: 150 }} /><col style={{ width: 500 }} /><col style={{ width: 90 }} />
          </colgroup>
          <thead><tr><th /><th>检查项</th><th>结果</th><th>确认</th></tr></thead>
          <tbody>
            {results.map((r, i) => (
              <tr key={r}>
                <td>{i === 2 && <Tri d="r" s={10} c="#000" />}</td>
                <td />
                <ResultCell $selected={i === 2}>{r}</ResultCell>
                <td><Tick type="checkbox" defaultChecked aria-label={r} /></td>
              </tr>
            ))}
          </tbody>
        </ResultTable>
      </ResultBox>
      <DialogButtons><PushButton>导出</PushButton><PushButton>确定</PushButton></DialogButtons>
    </DialogBody>
    <Grip width="10" height="10" fill="#b4b4b4">
      <path d="M7 0h2v2H7zM7 3.500h2v2H7zM7 7h2v2H7zM3.500 3.500h2v2h-2zM3.500 7h2v2h-2zM0 7h2v2H0z" />
    </Grip>
  </Dialog>
);

const Status = () => (
  <StatusBar>
    <StatusPart>
      <svg width="23" height="20" fill="#1c3f7c">
        <rect width="10" height="9" rx="1" /><rect x="12" width="10" height="9" rx="1" />
        <rect y="11" width="10" height="9" rx="1" /><rect x="12" y="11" width="10" height="9" rx="1" />
      </svg>
      信息中心
      <svg width="18" height="24" viewBox="0 0 18 24" fill="#1c3f7c">
        <circle cx="9" cy="3" r="3" /><path d="M4 7h10l2 2v7h-3v8h-3v-7H8v7H5v-8H2V9z" />
      </svg>
      龙敦远
      <output>Model:【正式】||DB:【正式库】</output>
    </StatusPart>
    <span>兴森快捷 EMS工程系统 Version: 1.0.0.99</span>
    <StatusPart $end>
      <a href="#changelog">版本更新记录</a>
      <svg width="20" height="21" fill="none" stroke={navy}>
        <circle cx="10" cy="10.500" r="8.500" strokeWidth="3" /><path d="M11 5v6.500H7" strokeWidth="2" />
      </svg>
      <time>2023-05-11 20:45:55</time>
    </StatusPart>
  </StatusBar>
);

const Tasks = () => (
  <TaskBar>
    <StartButton aria-label="开始">
      <svg width="38" height="38" viewBox="0 0 38 38">
        <defs>
          <radialGradient id="orb" cx="50%" cy="90%" r="90%">
            <stop offset="0" stopColor="#4fd0f5" /><stop offset="0.500" stopColor="#22639c" /><stop offset="1" stopColor="#7f9ab5" />
          </radialGradient>
        </defs>
        <circle cx="19" cy="19" r="18" fill="url(#orb)" stroke="#1d3d60" />
        <path d="M11 11c3-2 5-1 7 0l-2 8c-2-1-4-2-7 0z" fill="#ee5a28" />
        <path d="M20 12c3 1 5 1 8-1l-2 8c-3 2-5 1-8 0z" fill="#8cc63f" />
        <path d="M9 21c3-2 5-1 7 0l-2 7c-2-1-4-2-7 0z" fill="#3fa9f5" />
        <path d="M18 21c3 1 5 1 8-1l-2 8c-3 2-5 1-8 0z" fill="#fcd116" />
      </svg>
    </StartButton>
    <TaskButton aria-label="贝壳">
      <svg width="34" height="30" viewBox="0 0 34 30">
        <path d="M12 28C3 26 0 17 2 12 3 6 9 1 16 1s14 4 15 11c1 6-2 13-10 16z" fill="#fbd489" stroke="#c98a34" />
        <path d="M16 28 6 7M16 28 12 3M16 28 20 2M16 28 28 7M16 28 2 15" stroke="#d99a45" />
        <path d="m21 12 3 5 6 1-4 5 1 5-6-2-5 2 1-5-4-5 6-1z" fill="#f08a24" stroke="#b85c0e" />
      </svg>
    </TaskButton>
    <TaskButton aria-label="记事本">
      <svg width="26" height="28"><rect x="0.500" y="0.500" width="25" height="27" rx="2" fill="#f5fbff" stroke="#9cc4e0" />
        <path d="M3 5h20M3 9h20M3 13h20M3 17h20M3 21h20M3 25h20" stroke="#3d8fc0" strokeWidth="2" /></svg>
    </TaskButton>
    <TaskButton aria-label="G">
      <svg width="30" height="30" viewBox="0 0 30 30">
        <path d="M27 1v4c-2 2-5 2-8 2-7 0-11 4-11 10 0 5 3 7 6 7 4 0 6-2 7-6h-7l3-5h10c0 10-5 16-14 16C6 29 1 24 1 17 1 8 8 3 16 3c5 0 8 0 11-2z" fill="#d8260e" stroke="#6e1208" />
      </svg>
    </TaskButton>
    <TaskButton aria-label="磁盘">
      <svg width="31" height="31" viewBox="0 0 31 31">
        <path d="M1 1h27l2 3v26H1z" fill="#1d32c8" stroke="#0a1570" />
        <path d="M9 1h15v10H9z" fill="#d5dbe6" /><path d="M17 3h4v6h-4z" fill="#1d32c8" />
        <path d="M4 14h23v15H4z" fill="#fff" /><path d="M5 18h21M5 22h21M5 26h11" stroke="#cf2a2a" />
        <text x="17" y="28" fontSize="7" fontFamily="Liberation Mono">64</text>
      </svg>
    </TaskButton>
    <TaskButton $active $stack aria-label="EDS"><FLogo w={30} h={32} plain /></TaskButton>
    <TaskButton aria-label="工具">
      <svg width="34" height="28" viewBox="0 0 34 28">
        <path d="M2 5c2-4 8-5 11-3l1 5H3z" fill="#2ab5a5" stroke="#0a4a4a" />
        <ellipse cx="19" cy="17" rx="13" ry="9" fill="#0f6f78" stroke="#06363c" strokeWidth="2" />
        <ellipse cx="19" cy="16" rx="9" ry="6" fill="#35c4b8" /><ellipse cx="19" cy="15" rx="4" ry="3" fill="#0a3f57" stroke="#e0d84a" strokeWidth="2" />
        <path d="M3 9c0 8 2 14 8 17" stroke="#0a2a2e" strokeWidth="2" fill="none" />
      </svg>
    </TaskButton>
    <TaskButton $stack aria-label="X">
      <svg width="32" height="28" viewBox="0 0 32 28">
        <path d="M30 1 3 27" stroke="#eee" strokeWidth="3" /><path d="M30 1 3 27" stroke="#222" />
        <path d="M2 1h7l21 26h-7z" fill="#8a1592" stroke="#f4e8f6" />
      </svg>
    </TaskButton>
    <TaskButton aria-label="钉钉">
      <svg width="28" height="28" viewBox="0 0 28 28">
        <rect width="28" height="28" rx="6" fill="#1a8cff" />
        <path d="M8 5c5 3 11 4 12 8 1 3-2 5-3 7h2l-5 5 1-4h-3c-2-2-2-4-2-5l2 1c-3-3-4-7-4-12z" fill="#fff" />
      </svg>
    </TaskButton>
    <TaskButton aria-label="EDS 2"><FLogo w={30} h={32} plain /></TaskButton>
    <Tray>
      <svg width="16" height="14"><rect y="6" width="16" height="8" rx="1" fill="#d8d8d0" /><path d="M2 8.500h12M2 11.500h12" stroke="#555" strokeDasharray="1 1" /><path d="M3 5c2-4 5 0 9-4" stroke="#bbb" fill="none" /></svg>
      <svg width="16" height="16"><circle cx="8" cy="8" r="7.500" fill="#2a3fd0" stroke="#dfe4f2" /><path d="M5.500 6c0-3 5-3 5 0 0 2-2.500 2-2.500 4M8 11.500v1.500" stroke="#fff" strokeWidth="1.800" fill="none" /></svg>
      <svg width="10" height="18" fill="none" stroke="#fff"><path d="M3.500 1.500h6v3h-6zM1.500 3.500h5v3h-5z" /><path d="M2 14h6l-3 3z" fill="#fff" stroke="none" /></svg>
      <Tri d="u" c="#fff" />
      <Flag width="16" height="16"><path d="M1 0v15M2 2h9v6H2z" stroke="#fff" fill="#fff" /><circle cx="11" cy="10.500" r="5" fill="#d63a2a" /><path d="m9 8.500 4 4m0-4-4 4" stroke="#fff" strokeWidth="1.500" /></Flag>
      <svg width="16" height="14"><path d="M0 4h3l4-4v14l-4-4H0z" fill="#fff" /><path d="M9 4q2 3 0 6M11.500 2q4 5 0 10" stroke="#fff" fill="none" /></svg>
      <svg width="16" height="15" fill="none" stroke="#fff" strokeWidth="1.500"><path d="M5 3h10v8H5zM7 14h7M3 0v5h-2v-4M3 5v8h2" /></svg>
      <Clock>20:46<br />2023/5/11</Clock>
      <ShowDesktop aria-label="显示桌面" />
    </Tray>
  </TaskBar>
);

export default function App() {
  return (
    <Desktop>
      <GlobalStyle />
      <Top />
      <Body>
        <Side />
        <Documents>
          <TabStrip>
            <DocTab>
              <Bolt w={15} h={19} />新流程指示
              <button aria-label="关闭标签">
                <svg width="8" height="8" stroke={navy}><path d="M0 0l7 7M7 0 0 7" /></svg>
              </button>
            </DocTab>
            <Caret $size={5} />
          </TabStrip>
          <Tools />
          <MainInfo />
          <HSplitter />
          <Lower>
            <Process />
            <VSplitter $w={5} />
            <Params />
          </Lower>
        </Documents>
      </Body>
      <Status />
      <Tasks />
      <Check />
      <Pointer width="36" height="292" viewBox="0 0 36 292" fill="#0f0" stroke="#0f0">
        <path d="M20 30 4 286" strokeWidth="4" strokeLinecap="round" />
        <path d="M20 4 11 31h18z" strokeWidth="2" strokeLinejoin="round" />
      </Pointer>
    </Desktop>
  );
}
